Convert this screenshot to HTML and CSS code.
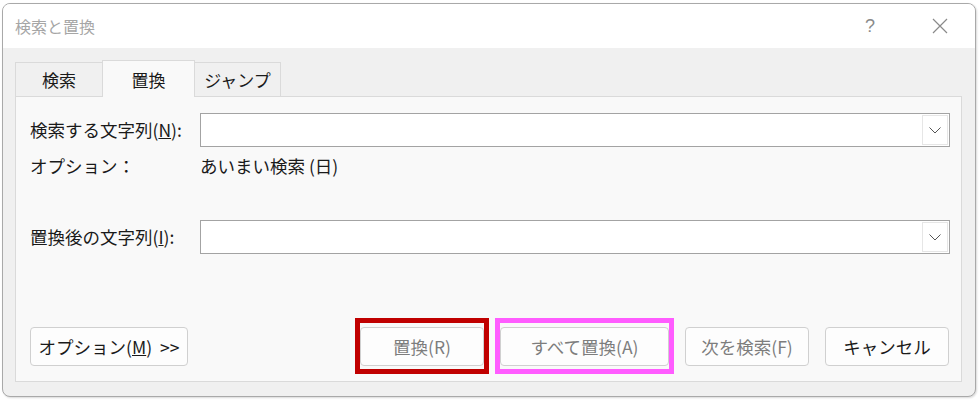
FILE: index.html
```html
<!DOCTYPE html>
<html lang="ja">
<head>
    <meta charset="UTF-8">
    <meta name="viewport" content="width=device-width">
    <title>検索と置換</title>
    <link rel="stylesheet" href="styles.css">
</head>
<body>
    <div class="dialog">
        <div class="titlebar">
            <span class="title">検索と置換</span>
            <span class="help">?</span>
            <span class="close">
                <svg width="16" height="16" viewBox="0 0 16 16">
                    <path d="M1 1 L15 15 M15 1 L1 15" stroke="#8a8a8a" stroke-width="1.2" fill="none"/>
                </svg>
            </span>
        </div>

        <div class="main">
            <div class="tabs">
                <div class="tab tab-search">検索</div>
                <div class="tab tab-active">置換</div>
                <div class="tab tab-jump">ジャンプ</div>
            </div>

            <div class="panel">
                <div class="row">
                    <label class="label">検索する文字列(<u>N</u>):</label>
                    <div class="combo">
                        <span class="combo-btn">
                            <svg width="12" height="7" viewBox="0 0 12 7">
                                <path d="M0.5 0.5 L6 6 L11.5 0.5" stroke="#555" stroke-width="1" fill="none"/>
                            </svg>
                        </span>
                    </div>
                </div>
                <div class="row row-option">
                    <span class="label">オプション：</span>
                    <span class="value">あいまい検索 (日)</span>
                </div>
                <div class="row row-replace">
                    <label class="label">置換後の文字列(<u>I</u>):</label>
                    <div class="combo">
                        <span class="combo-btn">
                            <svg width="12" height="7" viewBox="0 0 12 7">
                                <path d="M0.5 0.5 L6 6 L11.5 0.5" stroke="#555" stroke-width="1" fill="none"/>
                            </svg>
                        </span>
                    </div>
                </div>

                <div class="buttons">
                    <button class="btn btn-options">オプション(<u>M</u>)&nbsp; &gt;&gt;</button>
                    <div class="right-buttons">
                        <button class="btn btn-disabled btn-mark mark-red">置換(R)</button>
                        <button class="btn btn-disabled btn-wide btn-mark mark-pink">すべて置換(A)</button>
                        <button class="btn btn-disabled">次を検索(F)</button>
                        <button class="btn">キャンセル</button>
                    </div>
                </div>
            </div>
        </div>
    </div>
</body>
</html>
```

FILE: styles.css
```css
body {
    margin: 0;
    padding: 3px 3px 3px 2px;
    background-color: #ffffff;
    font-family: "Noto Sans CJK JP", "Noto Sans", sans-serif;
    color: #1a1a1a;
}

.dialog {
    width: 974px;
    height: 394px;
    box-sizing: border-box;
    border: 1px solid #a9a9a9;
    border-radius: 8px;
    background-color: #f0f0f0;
    box-shadow: 1px 1px 2px rgba(0, 0, 0, 0.15);
    display: flex;
    flex-direction: column;
    overflow: hidden;
}

.titlebar {
    height: 44px;
    background-color: #ffffff;
    display: flex;
    align-items: center;
    padding-left: 12px;
    flex-shrink: 0;
}

.title {
    font-size: 16px;
    color: #a6a6a6;
    flex: 1;
}

.help {
    font-family: "Liberation Sans", sans-serif;
    font-size: 18px;
    color: #8a8a8a;
    width: 70px;
    margin-right: 12px;
    text-align: center;
}

.close {
    width: 46px;
    display: flex;
    justify-content: center;
    margin-right: 12px;
}

.main {
    flex: 1;
    padding: 12px 13px 14px 12px;
    display: flex;
    flex-direction: column;
}

.tabs {
    display: flex;
    align-items: flex-end;
    height: 36px;
}

.tab {
    box-sizing: border-box;
    height: 34px;
    border: 1px solid #dadada;
    border-bottom: none;
    display: flex;
    align-items: center;
    justify-content: center;
    font-size: 17px;
    line-height: 1;
    background-color: #f0f0f0;
}

.tab-search {
    width: 87px;
    border-right: none;
}

.tab-active {
    width: 93px;
    height: 37px;
    margin-bottom: -1px;
    background-color: #f9f9f9;
    position: relative;
    z-index: 1;
}

.tab-jump {
    width: 86px;
    border-left: none;
}

.panel {
    flex: 1;
    border: 1px solid #dadada;
    background-color: #f9f9f9;
    padding: 16px 11px 15px 14px;
    display: flex;
    flex-direction: column;
}

.row {
    display: grid;
    grid-template-columns: 170px 1fr;
    align-items: center;
    height: 34px;
}

.label,
.value {
    font-size: 17.5px;
    line-height: 1;
}

.row-option {
    height: 24px;
    margin-top: 7px;
}

.row-replace {
    margin-top: 42px;
}

.combo {
    height: 34px;
    box-sizing: border-box;
    border: 1px solid #a3a3a3;
    background-color: #ffffff;
    display: flex;
    justify-content: flex-end;
    padding: 1px;
}

.combo-btn {
    width: 26px;
    box-sizing: border-box;
    border: 1px solid #e6e6e6;
    display: flex;
    align-items: center;
    justify-content: center;
}

.buttons {
    margin-top: auto;
    display: flex;
    justify-content: space-between;
}

.right-buttons {
    display: flex;
    gap: 16px;
    margin-right: 1px;
}

.btn {
    height: 39px;
    width: 124px;
    box-sizing: border-box;
    border: 1px solid #d0d0d0;
    border-radius: 4px;
    background-color: #fdfdfd;
    font-family: "Noto Sans CJK JP", "Noto Sans", sans-serif;
    font-size: 17.5px;
    line-height: 1;
    color: #1a1a1a;
    padding: 0;
}

.btn-options {
    width: 158px;
}

.btn-wide {
    width: 169px;
}

.btn-disabled {
    color: #7d7d7d;
}

.btn-mark {
    position: relative;
}

.btn-mark::after {
    content: "";
    position: absolute;
    left: -6px;
    right: -6px;
    top: -10px;
    bottom: -9px;
    border: 5px solid;
}

.mark-red::after {
    border-color: #c00000;
}

.mark-pink::after {
    border-color: #ff5cff;
}
```
